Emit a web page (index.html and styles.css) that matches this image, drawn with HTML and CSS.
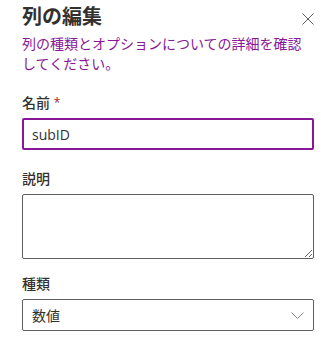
FILE: index.html
```html
<!DOCTYPE html>
<html lang="ja">
<head>
    <meta charset="UTF-8">
    <meta name="viewport" content="width=device-width, initial-scale=1.0">
    <title>列の編集</title>
    <link rel="stylesheet" href="styles.css">
</head>
<body>
    <div class="panel">
        <!-- Header -->
        <div class="panel-header">
            <h1>列の編集</h1>
            <button class="close-btn" aria-label="閉じる">
                <svg width="12" height="12" viewBox="0 0 12 12">
                    <path d="M0.5 0.5 L11.5 11.5 M11.5 0.5 L0.5 11.5" stroke="#605e5c" stroke-width="1" fill="none"/>
                </svg>
            </button>
        </div>
        <p class="desc">列の種類とオプションについての詳細を確認してください。</p>

        <!-- Fields -->
        <div class="field">
            <label for="col-name">名前 <span class="req">*</span></label>
            <input type="text" id="col-name" class="text-input active" value="subID">
        </div>
        <div class="field">
            <label for="col-desc">説明</label>
            <textarea id="col-desc" class="text-area"></textarea>
        </div>
        <div class="field field-type">
            <label>種類</label>
            <div class="dropdown">
                <span>数値</span>
                <svg width="13" height="7" viewBox="0 0 13 7">
                    <path d="M0.5 0.5 L6.5 6.5 L12.5 0.5" stroke="#8a8886" stroke-width="1" fill="none"/>
                </svg>
            </div>
        </div>
    </div>
</body>
</html>
```

FILE: styles.css
```css
/* Global Styles */
* {
    margin: 0;
    padding: 0;
    box-sizing: border-box;
    font-family: 'Open Sans', 'Noto Sans CJK JP', sans-serif;
}

body {
    background-color: #ffffff;
    color: #323130;
}

.panel {
    padding: 3px 12px 0 22px;
}

.panel-header {
    display: flex;
    justify-content: space-between;
    align-items: flex-start;
}

.panel-header h1 {
    font-size: 20px;
    line-height: 28px;
    font-weight: 700;
    color: #323130;
}

.close-btn {
    background: none;
    border: none;
    width: 12px;
    height: 12px;
    margin-top: 10px;
    cursor: pointer;
}

.close-btn svg {
    display: block;
}

.desc {
    margin-top: 3px;
    font-size: 14px;
    line-height: 20px;
    color: #881798; /* Purple */
}

.field {
    margin-top: 14px;
}

.field-type {
    margin-top: 10px;
}

.field label {
    display: block;
    font-size: 14px;
    line-height: 20px;
    font-weight: 500;
    padding: 5px 0;
    color: #323130;
}

.req {
    color: #a4262c;
    font-size: 12px;
    vertical-align: top;
}

.text-input {
    display: block;
    width: 100%;
    height: 32px;
    border: 1px solid #605e5c;
    border-radius: 2px;
    padding: 0 8px;
    font-size: 14px;
    color: #323130;
    outline: none;
}

.text-input.active {
    border: 2px solid #881798;
    padding: 0 8px;
}

.text-area {
    display: block;
    width: 100%;
    height: 65px;
    border: 1px solid #605e5c;
    border-radius: 2px;
    padding: 6px 8px;
    font-size: 14px;
    resize: vertical;
}

.dropdown {
    display: flex;
    justify-content: space-between;
    align-items: center;
    height: 32px;
    border: 1px solid #605e5c;
    border-radius: 2px;
    padding: 0 9px 0 9px;
    font-size: 14px;
    color: #323130;
}
```
